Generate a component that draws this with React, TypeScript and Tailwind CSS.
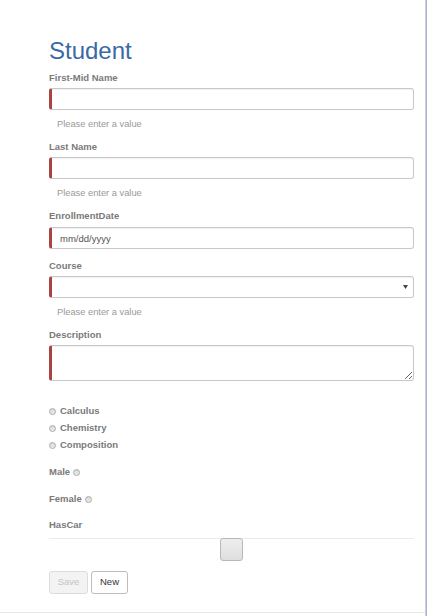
import React from "react";

const font = "font-['Liberation_Sans',Arial,sans-serif]";

function Label({ text, className = "" }: { text: string; className?: string }) {
  return (
    <div className={`text-[9.5px] leading-[12px] font-bold text-[#7a7a7a] ${className}`}>{text}</div>
  );
}

function Help({ className = "" }: { className?: string }) {
  return (
    <div className={`pl-[8px] text-[9.3px] leading-[12px] text-[#999] ${className}`}>
      Please enter a value
    </div>
  );
}

const fieldBox =
  "w-full rounded-[3px] border border-[#c8c8c8] border-l-[3px] border-l-[#a94442] bg-white shadow-[inset_0_1px_1px_rgba(0,0,0,0.06)] outline-none";

function Radio() {
  return (
    <span className="inline-block h-[7px] w-[7px] rounded-full border border-[#aaa] bg-gradient-to-b from-[#d8d8d8] to-[#ececec]" />
  );
}

export default function App() {
  return (
    <div className={`flex h-[616px] w-[428px] bg-white ${font}`}>
      <div className="flex w-[425px] flex-col">
        <div className="flex h-[612px] flex-col pl-[49px]">
          <div className="flex w-[365px] flex-col">
            <h2 className="mt-[39px] h-[24px] text-[24px] leading-[24px] text-[#3a6aa6]">Student</h2>

            <Label text="First-Mid Name" className="mt-[9px]" />
            <input className={`${fieldBox} mt-[4px] h-[22px]`} />
            <Help className="mt-[8px]" />

            <Label text="Last Name" className="mt-[11px]" />
            <input className={`${fieldBox} mt-[4px] h-[22px]`} />
            <Help className="mt-[8px]" />

            <Label text="EnrollmentDate" className="mt-[11px]" />
            <input
              placeholder="mm/dd/yyyy"
              className={`${fieldBox} mt-[5px] h-[22px] pl-[8px] text-[9.5px] text-[#555] placeholder:text-[#555]`}
            />

            <Label text="Course" className="mt-[11px]" />
            <div className={`${fieldBox} mt-[4px] flex h-[22px] items-center justify-end pr-[5px]`}>
              <svg width="5" height="4" viewBox="0 0 5 4">
                <path d="M0 0h5L2.5 4z" fill="#444" />
              </svg>
            </div>
            <Help className="mt-[8px]" />

            <Label text="Description" className="mt-[11px]" />
            <textarea className={`${fieldBox} mt-[4px] h-[36px] resize`} />

            <div className="mt-[24px] flex flex-col gap-[5px]">
              {["Calculus", "Chemistry", "Composition"].map((c) => (
                <div key={c} className="flex h-[12px] items-center gap-[4px]">
                  <Radio />
                  <span className="text-[9.5px] leading-[12px] font-bold text-[#7a7a7a]">{c}</span>
                </div>
              ))}
            </div>

            <div className="mt-[15px] flex h-[12px] items-center gap-[3px]">
              <span className="text-[9.5px] leading-[12px] font-bold text-[#7a7a7a]">Male</span>
              <Radio />
            </div>
            <div className="mt-[15px] flex h-[12px] items-center gap-[3px]">
              <span className="text-[9.5px] leading-[12px] font-bold text-[#7a7a7a]">Female</span>
              <Radio />
            </div>

            <Label text="HasCar" className="mt-[14px]" />
            <div className="mt-[7px] flex h-[22px] justify-center border-t border-t-[#ebebeb]">
              <div className="-mt-px h-[23px] w-[23px] rounded-[3px] border border-[#b8b8b8] bg-gradient-to-b from-[#eeeeee] to-[#dedede]" />
            </div>

            <div className="mt-[11px] flex gap-[3px]">
              <button className="h-[23px] w-[39px] rounded-[3px] border border-[#dcdcdc] bg-[#f3f3f3] text-[9.5px] text-[#c4c4c4]">
                Save
              </button>
              <button className="h-[23px] w-[37px] rounded-[3px] border border-[#bdbdbd] bg-white text-[9.5px] text-[#333]">
                New
              </button>
            </div>
          </div>
        </div>
        <div className="h-px w-full bg-[#e6e6e6]" />
      </div>
      <div className="flex h-full w-[2px]">
        <div className="h-full w-px bg-[#c9ced8]" />
        <div className="h-full w-px bg-[#a8b6cc]" />
      </div>
    </div>
  );
}
